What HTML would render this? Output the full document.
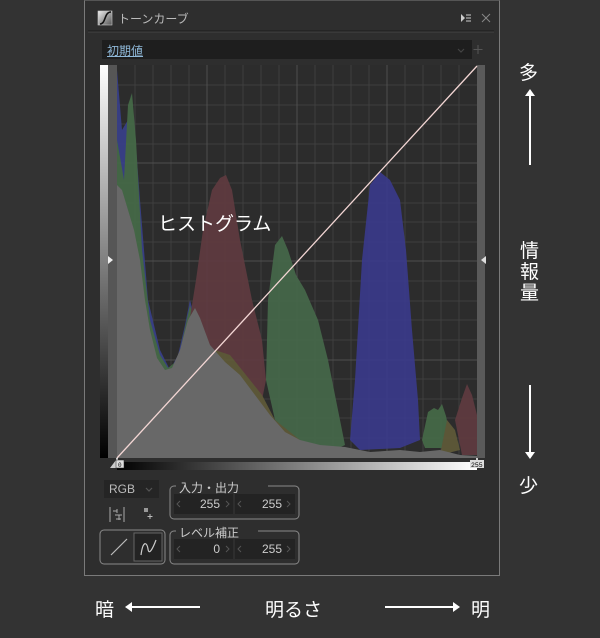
<!DOCTYPE html>
<html><head><meta charset="utf-8"><style>
html,body{margin:0;padding:0;width:600px;height:638px;background:#333;overflow:hidden}
body{font-family:"Liberation Sans","Noto Sans CJK JP",sans-serif;position:relative}
.a{position:absolute}
.cj{font-family:"Liberation Sans","Noto Sans CJK JP",sans-serif;color:#fff}
</style></head><body>
<div class="a" style="left:84px;top:0;width:414px;height:574px;border:1px solid #7a7a7a;border-top-color:#555;background:#2e2e2e"></div>
<svg class="a" style="left:0;top:0" width="600" height="638" viewBox="0 0 600 638">
<defs>
<linearGradient id="gv" x1="0" y1="0" x2="0" y2="1"><stop offset="0" stop-color="#fff"/><stop offset="1" stop-color="#000"/></linearGradient>
<linearGradient id="gh" x1="0" y1="0" x2="1" y2="0"><stop offset="0" stop-color="#000"/><stop offset="1" stop-color="#fff"/></linearGradient>
<linearGradient id="ic" x1="0" y1="0" x2="1" y2="1"><stop offset="0" stop-color="#eee"/><stop offset="1" stop-color="#555"/></linearGradient>
</defs>
<!-- title -->
<rect x="98" y="11" width="14" height="14" fill="url(#ic)" stroke="#ccc" stroke-width="0.6"/>
<path d="M100 24 C106 24 104 12 111 12" stroke="#111" stroke-width="1.6" fill="none"/>
<line x1="88" y1="31" x2="494" y2="31" stroke="#1c1c1c"/>
<line x1="88" y1="32" x2="494" y2="32" stroke="#444"/>
<path d="M461 14 L465 18 L461 22Z" fill="#ccc"/>
<path d="M466 15h5M466 18h5M466 21h5" stroke="#ccc" stroke-width="1"/>
<path d="M482 14l8 8M490 14l-8 8" stroke="#888" stroke-width="1"/>
<!-- preset -->
<rect x="102" y="40" width="370" height="19" fill="#1e1e1e"/>
<path d="M458 49l3 3 3-3" stroke="#444" fill="none" stroke-width="1.2"/>
<path d="M478 45v9M473.5 49.5h9" stroke="#555" stroke-width="1"/>
<!-- graph -->
<rect x="100" y="65" width="8" height="393" fill="url(#gv)"/>
<rect x="108" y="65" width="9" height="393" fill="#565656"/>
<rect x="477" y="65" width="8" height="393" fill="#5a5a5a"/>
<rect x="117" y="65" width="360" height="393" fill="#2c2c2c"/>
<g stroke="#3e3e3e" stroke-width="1">
<path d="M135 65v393M153 65v393M171 65v393M189 65v393M225 65v393M243 65v393M261 65v393M279 65v393M315 65v393M333 65v393M351 65v393M369 65v393M405 65v393M423 65v393M441 65v393M459 65v393"/>
<path d="M117 85h360M117 105h360M117 124h360M117 144h360M117 183h360M117 203h360M117 222h360M117 242h360M117 281h360M117 301h360M117 320h360M117 340h360M117 379h360M117 399h360M117 418h360M117 438h360"/>
</g>
<g stroke="#4e4e4e" stroke-width="1">
<path d="M207 65v393M297 65v393M387 65v393M117 163h360M117 261h360M117 360h360"/>
</g>
<g opacity="0.92">
<path d="M117 70 L122 130 L128 120 L131 95 L134 120 L140 200 L148 300 L160 350 L170 370 L178 355 L185 325 L190 300 L195 320 L205 358 L225 360 L240 380 L260 410 L275 440 L290 450 L117 458Z" fill="#38408a"/>
<path d="M117 140 L124 180 L128 105 L132 93 L136 140 L142 250 L150 320 L160 355 L168 368 L178 360 L190 305 L200 340 L117 458Z" fill="#466a48"/>
<path d="M188 330 L196 280 L203 230 L212 190 L220 178 L226 175 L232 190 L240 240 L252 300 L262 340 L266 380 L260 410 L252 420 L240 400 L220 380 L200 360Z" fill="#5f3b40"/>
<path d="M268 300 L275 245 L282 236 L288 250 L296 275 L305 290 L318 320 L328 360 L338 410 L345 445 L330 452 L300 450 L275 420 L266 380Z" fill="#46684a"/>
<path d="M350 440 L355 380 L362 260 L370 185 L380 172 L390 180 L400 200 L406 250 L412 330 L418 400 L420 440 L400 448 L360 450Z" fill="#3a3a8a"/>
<path d="M422 440 L428 412 L434 408 L438 410 L442 404 L446 416 L450 435 L445 448 L425 448Z" fill="#466a48"/>
<path d="M455 420 L462 398 L467 384 L472 395 L477 415 L477 455 L462 455Z" fill="#5f3b40"/>
<path d="M215 350 L230 355 L250 380 L262 395 L275 420 L300 440 L305 450 L270 452 L240 440Z" fill="#5f5a38"/>
<path d="M447 420 L455 430 L460 450 L440 455Z" fill="#5f5a38"/>
</g>
<path d="M117 185 L122 190 L128 210 L134 230 L140 260 L145 300 L150 330 L157 358 L165 370 L172 368 L180 350 L188 320 L195 308 L200 318 L210 345 L225 362 L240 375 L255 395 L270 415 L285 432 L300 440 L320 445 L345 447 L370 452 L400 450 L420 452 L440 450 L460 455 L477 456 L477 458 L117 458Z" fill="#686868"/>
<line x1="117" y1="458" x2="477" y2="66" stroke="#f3d6d4" stroke-width="1.3"/>
<text x="158" y="230" font-family="Liberation Sans, Noto Sans CJK JP, sans-serif" font-size="19" fill="#fff">ヒストグラム</text>
<path d="M108 256l5 4-5 4Z" fill="#eee"/>
<path d="M486 256l-5 4 5 4Z" fill="#ddd"/>
<rect x="117" y="462" width="360" height="8" fill="url(#gh)"/>
<path d="M110 468 L116 460 L116 458 L118 458 L118 468Z" fill="#ccc"/>
<rect x="116" y="460" width="8" height="8" fill="#ddd" stroke="#222" stroke-width="0.5"/>
<text x="118" y="467" font-size="6" fill="#000" font-family="Liberation Mono">0</text>
<path d="M484 468 L478 460 L478 458 L476 458 L476 468Z" fill="#ccc"/>
<rect x="470" y="460" width="14" height="8" fill="#ddd"/>
<text x="471" y="467" font-size="6.5" fill="#000" font-family="Liberation Mono">255</text>
<!-- controls -->
<rect x="104" y="480" width="55" height="18" fill="#252525"/>
<path d="M146 488l3 3 3-3" stroke="#555" fill="none" stroke-width="1.2"/>
<rect x="170" y="486" width="129" height="33" rx="4" fill="none" stroke="#8a8a8a"/>
<rect x="174" y="494" width="59" height="20" fill="#232323"/>
<rect x="235" y="494" width="60" height="20" fill="#232323"/>
<rect x="170" y="531" width="129" height="33" rx="4" fill="none" stroke="#8a8a8a"/>
<rect x="174" y="539" width="59" height="20" fill="#232323"/>
<rect x="235" y="539" width="60" height="20" fill="#232323"/>
<g stroke="#555" fill="none" stroke-width="1"><path d="M180 501l-3 3 3 3M226 501l3 3-3 3M241 501l-3 3 3 3M287 501l3 3-3 3M180 546l-3 3 3 3M226 546l3 3-3 3M241 546l-3 3 3 3M287 546l3 3-3 3"/></g>
<rect x="176" y="480" width="92" height="12" fill="#2e2e2e"/>
<rect x="176" y="525" width="82" height="12" fill="#2e2e2e"/>
<rect x="100" y="530" width="65" height="34" rx="4" fill="none" stroke="#8a8a8a"/>
<rect x="134" y="533" width="28" height="28" fill="#232323" stroke="#666"/>
<path d="M111 555l16-16" stroke="#bbb" stroke-width="1.2"/>
<path d="M141 555 C143 540 147 542 148 549 C149 556 153 548 156 540" stroke="#ccc" stroke-width="1.2" fill="none"/>
<g stroke="#aaa" stroke-width="1" fill="none"><path d="M110 507v15M124 507v15M113 511h4M115 515h7M116 519h5M117 509v4M119 515v5"/></g>
<rect x="144" y="508" width="4" height="4" fill="#999"/>
<path d="M150 514v5M147.5 516.5h5" stroke="#bbb"/>
<!-- annotations -->
<path d="M530 165V93" stroke="#fff" stroke-width="2"/><path d="M525 96l5-7 5 7Z" fill="#fff"/>
<path d="M530 385V455" stroke="#fff" stroke-width="2"/><path d="M525 452l5 7 5-7Z" fill="#fff"/>
<path d="M200 607H130" stroke="#fff" stroke-width="2"/><path d="M132 602l-7 5 7 5Z" fill="#fff"/>
<path d="M385 607H455" stroke="#fff" stroke-width="2"/><path d="M453 602l7 5-7 5Z" fill="#fff"/>
</svg>
<div class="a" style="left:118px;top:10px;font-size:12px;color:#bbb">トーンカーブ</div>
<div class="a" style="left:107px;top:42px;font-size:12px;color:#8fb8d8;text-decoration:underline">初期値</div>
<div class="a" style="left:109px;top:482px;font-size:12px;color:#bbb">RGB</div>
<div class="a" style="left:179px;top:479px;font-size:12px;color:#ccc">入力・出力</div>
<div class="a" style="left:179px;top:524px;font-size:12px;color:#ccc">レベル補正</div>
<div class="a" style="left:196px;top:497px;width:24px;text-align:right;font-size:12px;color:#ccc">255</div>
<div class="a" style="left:258px;top:497px;width:24px;text-align:right;font-size:12px;color:#ccc">255</div>
<div class="a" style="left:196px;top:542px;width:24px;text-align:right;font-size:12px;color:#ccc">0</div>
<div class="a" style="left:258px;top:542px;width:24px;text-align:right;font-size:12px;color:#ccc">255</div>
<div class="a cj" style="left:519px;top:58px;font-size:19px">多</div>
<div class="a cj" style="left:520px;top:241px;font-size:19px;line-height:21px;width:20px">情<br>報<br>量</div>
<div class="a cj" style="left:519px;top:471px;font-size:19px">少</div>
<div class="a cj" style="left:95px;top:595px;font-size:19px">暗</div>
<div class="a cj" style="left:265px;top:595px;font-size:19px">明るさ</div>
<div class="a cj" style="left:471px;top:595px;font-size:19px">明</div>
</body></html>
